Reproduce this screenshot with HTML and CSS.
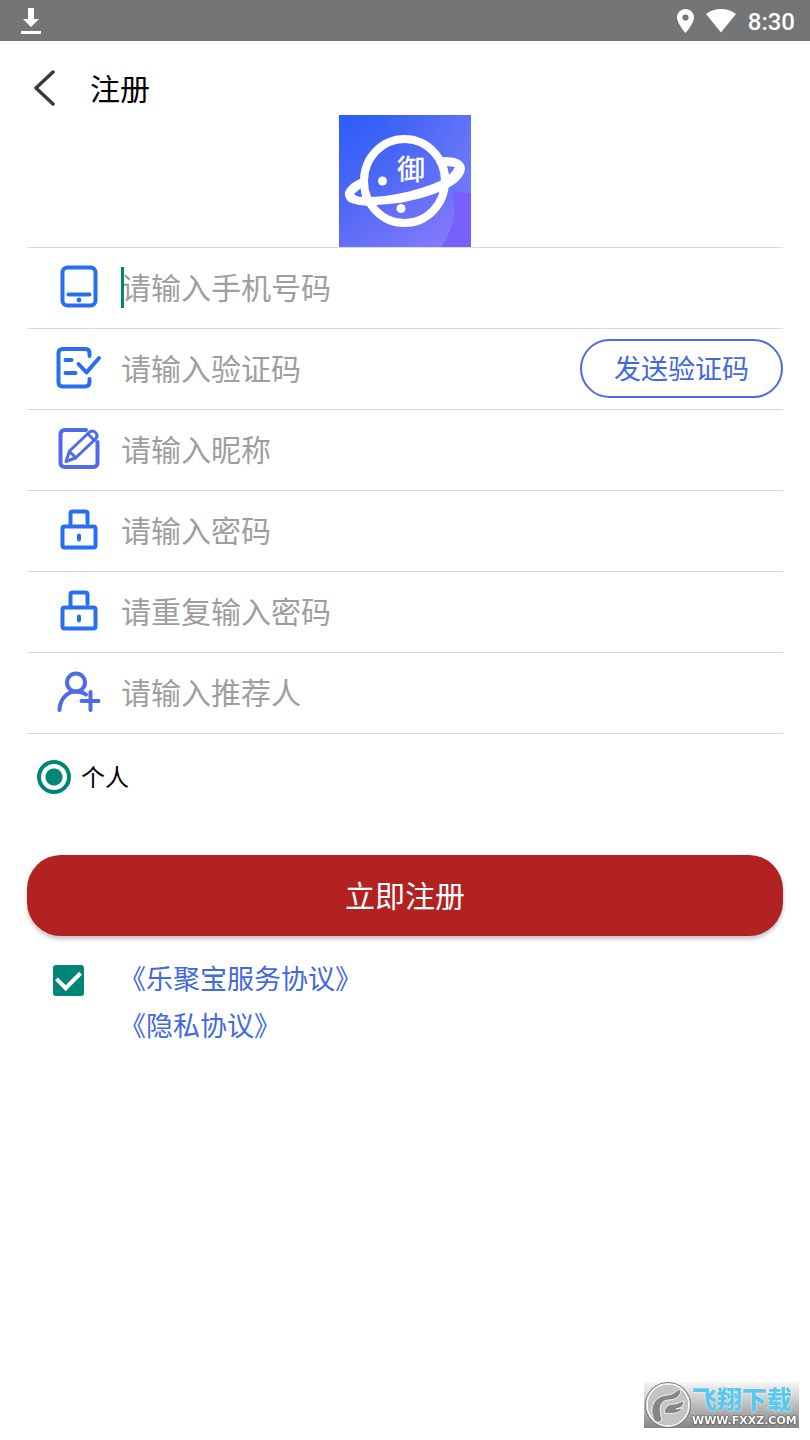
FILE: index.html
```html
<!DOCTYPE html>
<html lang="zh-CN">
<head>
<meta charset="utf-8">
<meta name="viewport" content="width=device-width, initial-scale=1">
<title>注册</title>
<link rel="stylesheet" href="styles.css">
</head>
<body>
<div class="status">
  <svg class="status-download" width="20" height="26" viewBox="0 0 20 26" fill="#fff"><path d="M7 0h6v11h5l-8 8-8-8h5zM0 23h20v3H0z"/></svg>
  <svg width="17" height="24" viewBox="0 0 17 24"><path fill="#fff" fill-rule="evenodd" d="M8.500 0C3.800 0 0 3.700 0 8.500 0 14.500 8.500 24 8.500 24S17 14.500 17 8.500C17 3.700 13.200 0 8.500 0zm0 5.400a3.100 3.100 0 1 1 0 6.200 3.100 3.100 0 0 1 0-6.200z"/></svg>
  <svg width="30" height="24" viewBox="0 0 30 24"><path fill="#fff" d="M15 23.500 0 5C4.500 1.500 9.500 0 15 0S25.500 1.500 30 5z"/></svg>
  <span class="clock">8:30</span>
</div>
<header class="header">
  <button class="back" type="button" aria-label="返回"><svg width="22" height="38" viewBox="0 0 22 38" fill="none" stroke="#3a3a3a" stroke-width="3.500" stroke-linecap="round" stroke-linejoin="round"><path d="M19 3 2 19l17 16"/></svg></button>
  <h1 class="title">注册</h1>
</header>
<main class="page">
  <svg class="logo" width="132" height="132" viewBox="0 0 132 132">
    <defs>
      <linearGradient id="bg" x1="0" y1="0" x2=".7" y2="1"><stop offset="0" stop-color="#2b5cf8"/><stop offset=".5" stop-color="#5069f5"/><stop offset="1" stop-color="#8279fb"/></linearGradient>
      <linearGradient id="glow" gradientUnits="userSpaceOnUse" x1="52" y1="20" x2="132" y2="60"><stop offset="0" stop-color="#4064f5"/><stop offset="1" stop-color="#6f78fb"/></linearGradient>
    </defs>
    <path fill="url(#bg)" d="M0 0h132v132H0z"/>
    <path fill="url(#glow)" d="M52 0h80v78C87 79 50 47 52 0z"/>
    <path fill="#7860fa" d="M113 76q9 2 19 2v54h-30c13-18 16-38 11-56z"/>
    <ellipse cx="65.500" cy="66" rx="40.500" ry="42" fill="none" stroke="#fff" stroke-width="8"/>
    <path fill="#fff" fill-rule="evenodd" d="M23 63C12 67 5 75 6 80c1 6 5 8 10 9 7 2 14 2 22 1 14-1 25-2 36-5 18-4 30-9 40-15 8-5 12-12 12-17-1-8-9-11-22-11l2 10c2 3 2 8-1 12-14 7-31 12-47 15-10 2-20 3-29 3L22 73zM22 73l-7 6q3 3 8 3zM108 51l8 1q-2 4-6 8z"/>
    <circle cx="43.500" cy="66" r="4.500" fill="#fff"/><circle cx="62" cy="93.500" r="4.500" fill="#fff"/>
    <text class="logo-text" x="58" y="65">御</text>
  </svg>
  <form class="form">
    <div class="row">
      <label class="icon" for="phone"><svg width="48" height="48" viewBox="0 0 48 48"><rect x="7.500" y="4.500" width="33" height="38" rx="5"/><path d="M13.500 31.500h21"/><circle class="dot" cx="24" cy="37" r="2.400"/></svg></label>
      <div class="field"><span class="caret"></span><input id="phone" type="tel" placeholder="请输入手机号码"></div>
    </div>
    <div class="row">
      <label class="icon" for="code"><svg width="48" height="48" viewBox="0 0 48 48"><path d="M34.500 12V9q0-4-4-4H8Q3.500 5 3.500 9v29q0 4.500 4.500 4.500h22q4.500 0 4.500-5V35M10.500 16h6M10.500 29h10M23.500 20l8 8.500L44 14"/></svg></label>
      <div class="field"><input id="code" type="text" placeholder="请输入验证码"></div>
      <button class="send" type="button">发送验证码</button>
    </div>
    <div class="row">
      <label class="icon violet" for="nick"><svg width="48" height="48" viewBox="0 0 48 48"><path d="M31 5H10q-4.500 0-4.500 4.500v28Q5.500 42 10 42h28q4.500 0 4.500-4.500V17"/><path class="thin" d="m11 36.500 3.500-10.500L34 7.500q3.500-3 6.500 0t0 6.500L20.500 33zM32.500 8.500l7 7M14.500 26.500l6.500 6.500"/></svg></label>
      <div class="field"><input id="nick" type="text" placeholder="请输入昵称"></div>
    </div>
    <div class="row">
      <label class="icon" for="pass"><svg width="48" height="48" viewBox="0 0 48 48"><rect x="7.500" y="20.500" width="33" height="21" rx="2"/><path d="M15.500 20V7.500q0-2 2-2h13q2 0 2 2V17M24 29.500v4"/></svg></label>
      <div class="field"><input id="pass" type="password" placeholder="请输入密码"></div>
    </div>
    <div class="row">
      <label class="icon" for="again"><svg width="48" height="48" viewBox="0 0 48 48"><rect x="7.500" y="20.500" width="33" height="21" rx="2"/><path d="M15.500 20V7.500q0-2 2-2h13q2 0 2 2V17M24 29.500v4"/></svg></label>
      <div class="field"><input id="again" type="password" placeholder="请重复输入密码"></div>
    </div>
    <div class="row">
      <label class="icon violet" for="referrer"><svg width="48" height="48" viewBox="0 0 48 48"><circle cx="21" cy="14.500" r="9"/><path d="M4.500 42C5 31 12 23.500 21 23.500q6 0 10 3M35.500 24v18M26.500 33h17"/></svg></label>
      <div class="field"><input id="referrer" type="text" placeholder="请输入推荐人"></div>
    </div>
    <label class="kind"><input class="radio" type="radio" name="kind" checked><span class="kind-name">个人</span></label>
    <button class="submit" type="submit">立即注册</button>
    <div class="agree">
      <input class="check" type="checkbox" checked aria-label="同意协议">
      <div class="links"><a href="#service">《乐聚宝服务协议》</a><a href="#privacy">《隐私协议》</a></div>
    </div>
  </form>
</main>
<div class="watermark">
  <svg width="48" height="46" viewBox="0 0 48 46"><circle cx="24" cy="23" r="21.500" fill="#c4c4c4" stroke="#777" stroke-width="3"/><circle cx="24" cy="23" r="21" fill="none" stroke="#f4f4f4" stroke-width="2"/><g fill="#858585" stroke="#f2f2f2" stroke-width="1" stroke-linejoin="round"><path d="M10 38C4 24 12 14 23 13c7 0 9-5 14-6 0 8-6 11-13 11-9 1-9 9-6 20-3 3-5 3-8 0z"/><path d="M20 31c1-8 6-9 11-9 4 0 5-3 9-3-1 6-4 7-8 8 3 0 5-1 7-1-4 6-11 6-19 5z"/></g></svg>
  <div class="mark-text"><span class="mark-name">飞翔下载</span><span class="mark-url">WWW.FXXZ.COM</span></div>
</div>
</body>
</html>
```
FILE: styles.css
```css
* { box-sizing: border-box; }
body {
  margin: 0;
  min-height: 100vh;
  background: #fff;
  color: #000;
  font-family: "Noto Sans CJK SC", sans-serif;
}
svg { display: block; flex: none; }
button, input { font-family: inherit; }
.status {
  display: flex;
  align-items: center;
  gap: 12px;
  height: 41px;
  padding: 0 15px 0 21px;
  background: #757575;
}
.status-download { margin-right: auto; }
.clock {
  color: #fff;
  font: 500 24px/40px Roboto, sans-serif;
  padding-top: 2px;
}
.header {
  display: flex;
  align-items: flex-start;
  gap: 34px;
  height: 74px;
  padding: 20px 34px 0;
}
.back {
  display: flex;
  margin: 8px 0 0;
  padding: 0;
  border: 0;
  background: none;
}
.title {
  margin: 4px 0 0;
  font-size: 30px;
  font-weight: 400;
  line-height: 44px;
}
.page { padding: 0 27px; }
.logo { margin: 0 auto; }
.logo-text { font-size: 28px; font-weight: 500; fill: #fff; }
.form { border-top: 1px solid #dadada; }
.row {
  display: flex;
  align-items: center;
  height: 81px;
  border-bottom: 1px solid #dadada;
}
.icon { width: 67px; padding: 0 0 2px 28px; }
.icon svg {
  fill: none;
  stroke: #276fee;
  stroke-width: 4;
  stroke-linecap: round;
  stroke-linejoin: round;
}
.icon.violet svg { stroke: #4d6ce6; }
.icon .thin { stroke-width: 3; }
.icon .dot { fill: #276fee; stroke: none; }
.field {
  position: relative;
  flex: 1;
  min-width: 0;
  padding-left: 27px;
}
.field input {
  display: block;
  width: 100%;
  height: 44px;
  padding: 0 0 4px;
  border: 0;
  outline: 0;
  background: none;
  color: #000;
  font-size: 30px;
}
.field input::placeholder { color: #9e9e9e; opacity: 1; }
.caret {
  position: absolute;
  left: 27px;
  top: 1px;
  width: 3px;
  height: 41px;
  background: #008577;
}
.send {
  width: 203px;
  height: 59px;
  margin-bottom: 2px;
  padding: 0 0 2px;
  border: 2px solid #4e6be3;
  border-radius: 30px;
  background: #fff;
  color: #4169e1;
  font-size: 27px;
}
.kind {
  display: flex;
  align-items: center;
  gap: 10px;
  width: max-content;
  margin: 24px 0 0 10px;
  font-size: 24px;
  line-height: 36px;
}
.kind-name { padding-bottom: 2px; }
.radio, .check { appearance: none; margin: 0; flex: none; }
.radio {
  width: 34px;
  height: 34px;
  border: 4px solid #008577;
  border-radius: 50%;
  background: radial-gradient(circle, #008577 8px, #fff 9px);
}
.submit {
  display: block;
  width: 100%;
  height: 81px;
  margin-top: 59px;
  padding: 0 0 4px;
  border: 0;
  border-radius: 34px;
  background: #b22222;
  box-shadow: 0 3px 4px rgba(0, 0, 0, .24);
  color: #fff;
  font-size: 30px;
}
.agree {
  display: flex;
  gap: 35px;
  padding: 18px 26px;
}
.check {
  width: 31px;
  height: 31px;
  margin-top: 11px;
  border-radius: 3px;
  background: #008577;
  display: grid;
  place-items: center;
}
.check:checked::before {
  content: "";
  width: 11px;
  height: 19px;
  margin-bottom: 6px;
  border: solid #fff;
  border-width: 0 4px 4px 0;
  transform: rotate(45deg);
}
.links { display: flex; flex-direction: column; }
.links a {
  color: #4169e1;
  font-size: 27px;
  line-height: 47px;
  text-decoration: none;
}
.watermark {
  position: fixed;
  right: 11px;
  bottom: 12px;
  display: flex;
  height: 46px;
  background: linear-gradient(#f6f6f6, #858585);
}
.mark-text { display: flex; flex-direction: column; width: 107px; }
.mark-name {
  color: #5cc8ee;
  font-size: 25px;
  font-weight: 900;
  line-height: 33px;
  white-space: nowrap;
  text-shadow: 0 0 2px #fff;
}
.mark-url {
  color: #fff;
  font: 700 11px/12px "DejaVu Sans", sans-serif;
  text-shadow: 0 0 2px #333, 0 0 1px #333;
}
```
